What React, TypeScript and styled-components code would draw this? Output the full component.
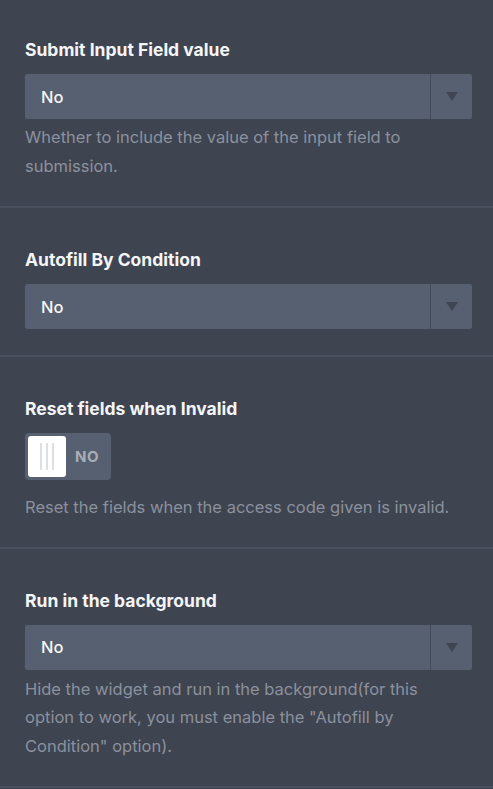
import styled, { createGlobalStyle } from "styled-components";

const Global = createGlobalStyle`
  html, body {
    margin: 0;
    padding: 0;
    background: #3f4451;
  }
  * {
    box-sizing: border-box;
  }
`;

const Panel = styled.div`
  width: 493px;
  min-height: 789px;
  background: #3f4451;
  font-family: "Inter", "Liberation Sans", sans-serif;
`;

const Section = styled.div<{ $first?: boolean; $bottom?: number }>`
  padding: ${(p) => (p.$first ? "40px" : "42px")} 21px
    ${(p) => p.$bottom ?? 26}px 25px;
  border-bottom: 2px solid #4a505d;
`;

const Title = styled.div`
  font-size: 17.5px;
  font-weight: 700;
  line-height: 20px;
  color: #f4f5f7;
  margin-bottom: 14px;
`;

const Select = styled.div`
  display: flex;
  height: 45px;
  background: #566070;
  border-radius: 2px;
`;

const Value = styled.div`
  flex: 1;
  display: flex;
  align-items: center;
  padding-left: 16px;
  font-size: 16.5px;
  font-weight: 500;
  color: #f4f5f7;
`;

const Caret = styled.div`
  width: 42px;
  display: flex;
  align-items: center;
  justify-content: center;
  border-left: 1px solid #454b58;
`;

const Arrow = styled.span`
  width: 0;
  height: 0;
  border-left: 6px solid transparent;
  border-right: 6px solid transparent;
  border-top: 9px solid #3f4552;
`;

const Hint = styled.p<{ $gap: number }>`
  margin: ${(p) => p.$gap}px 0 0;
  font-size: 16.5px;
  line-height: 28.5px;
  color: #8b919d;
  padding-right: 6px;
`;

const Toggle = styled.div`
  display: flex;
  align-items: center;
  width: 86px;
  height: 47px;
  padding: 3px;
  background: #566070;
  border-radius: 4px;
`;

const Knob = styled.div`
  width: 38px;
  height: 41px;
  background: #ffffff;
  border-radius: 3px;
  display: flex;
  align-items: center;
  justify-content: center;
  gap: 4px;
`;

const Grip = styled.span`
  width: 2px;
  height: 27px;
  background: #dcdfe4;
`;

const ToggleText = styled.span`
  margin-left: 9px;
  font-size: 15px;
  font-weight: 700;
  letter-spacing: 0.5px;
  color: #a8aeb8;
`;

function Dropdown({ value }: { value: string }) {
  return (
    <Select>
      <Value>{value}</Value>
      <Caret>
        <Arrow />
      </Caret>
    </Select>
  );
}

export default function App() {
  return (
    <Panel>
      <Global />
      <Section $first>
        <Title>Submit Input Field value</Title>
        <Dropdown value="No" />
        <Hint $gap={4}>
          Whether to include the value of the input field to submission.
        </Hint>
      </Section>
      <Section>
        <Title>Autofill By Condition</Title>
        <Dropdown value="No" />
      </Section>
      <Section $bottom={25}>
        <Title>Reset fields when Invalid</Title>
        <Toggle>
          <Knob>
            <Grip />
            <Grip />
            <Grip />
          </Knob>
          <ToggleText>NO</ToggleText>
        </Toggle>
        <Hint $gap={13}>
          Reset the fields when the access code given is invalid.
        </Hint>
      </Section>
      <Section>
        <Title>Run in the background</Title>
        <Dropdown value="No" />
        <Hint $gap={5}>
          Hide the widget and run in the background(for this option to work,
          you must enable the "Autofill by Condition" option).
        </Hint>
      </Section>
    </Panel>
  );
}
